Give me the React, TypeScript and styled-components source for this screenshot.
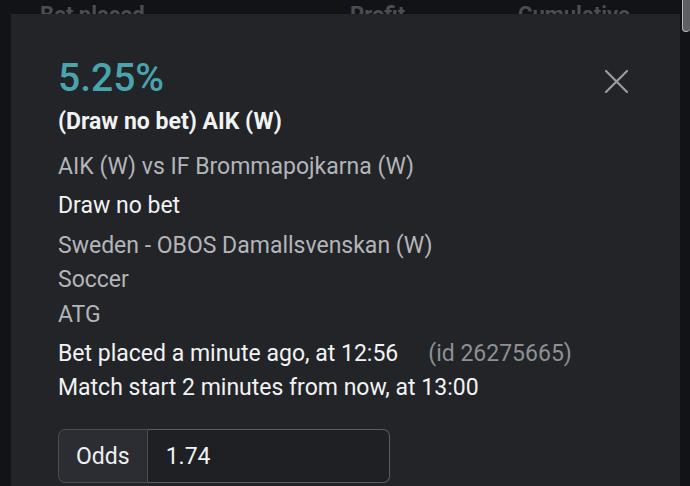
import styled, { createGlobalStyle } from 'styled-components';

const GlobalStyle = createGlobalStyle`
  html, body {
    margin: 0;
    padding: 0;
    background: #121316;
    font-family: Roboto, "Liberation Sans", sans-serif;
    overflow: hidden;
  }
`;

const Page = styled.div`
  position: relative;
  width: 690px;
  height: 486px;
  overflow: hidden;
`;

const TableHead = styled.div`
  display: grid;
  grid-template-columns: 310px 168px 1fr;
  padding: 2px 0 0 40px;
  color: #4b4d52;
  font-size: 22px;
  font-weight: 700;
  line-height: 26px;
`;

const ScrollThumb = styled.div`
  position: absolute;
  top: -6px;
  right: 0;
  width: 8px;
  height: 38px;
  border-radius: 5px;
  background: #5d5f63;
  border: 1px solid #b8b9bb;
  border-right: none;
  box-sizing: border-box;
`;

const Modal = styled.div`
  position: absolute;
  top: 14px;
  left: 11px;
  width: 669px;
  height: 500px;
  background: #222428;
  box-sizing: border-box;
  padding: 44px 47px 0;
`;

const CloseButton = styled.button`
  position: absolute;
  top: 52px;
  right: 49px;
  width: 30px;
  height: 30px;
  padding: 0;
  border: none;
  background: transparent;
  display: flex;
  align-items: center;
  justify-content: center;
`;

const Percent = styled.div`
  color: #49a4ae;
  font-size: 39px;
  font-weight: 500;
  line-height: 40px;
  margin-bottom: 7px;
`;

const Line = styled.div<{ $tone?: 'white' | 'gray'; $bold?: boolean; $gap?: number }>`
  color: ${(p) => (p.$tone === 'gray' ? '#b3b5b8' : '#f1f2f3')};
  font-size: 23px;
  font-weight: ${(p) => (p.$bold ? 700 : 400)};
  line-height: 34px;
  margin-top: ${(p) => p.$gap ?? 0}px;
  white-space: nowrap;
`;

const Muted = styled.span`
  color: #8e9094;
  margin-left: 30px;
`;

const InputGroup = styled.div`
  display: flex;
  width: 332px;
  height: 54px;
  margin-top: 24px;
`;

const Addon = styled.div`
  display: flex;
  align-items: center;
  padding: 0 17px;
  background: #2b2d32;
  border: 1px solid #4a4d53;
  border-radius: 7px 0 0 7px;
  color: #eef0f1;
  font-size: 23px;
`;

const Input = styled.input`
  flex: 1;
  min-width: 0;
  background: #1e2024;
  border: 1px solid #5a5d63;
  border-left: none;
  border-radius: 0 7px 7px 0;
  color: #f1f2f3;
  font-family: inherit;
  font-size: 23px;
  padding: 0 18px;
  outline: none;
`;

function App() {
  return (
    <Page>
      <GlobalStyle />
      <TableHead>
        <span>Bet placed</span>
        <span>Profit</span>
        <span>Cumulative</span>
      </TableHead>
      <ScrollThumb />
      <Modal>
        <CloseButton aria-label="Close">
          <svg width="25" height="25" viewBox="0 0 25 25">
            <path d="M2 2L23 23M23 2L2 23" stroke="#9b9c9f" strokeWidth="2.2" strokeLinecap="round" />
          </svg>
        </CloseButton>
        <Percent>5.25%</Percent>
        <Line $bold>(Draw no bet) AIK (W)</Line>
        <Line $tone="gray" $gap={11}>AIK (W) vs IF Brommapojkarna (W)</Line>
        <Line $gap={5}>Draw no bet</Line>
        <Line $tone="gray" $gap={6}>Sweden - OBOS Damallsvenskan (W)</Line>
        <Line $tone="gray">Soccer</Line>
        <Line $tone="gray" $gap={1}>ATG</Line>
        <Line $gap={5}>
          Bet placed a minute ago, at 12:56<Muted>(id 26275665)</Muted>
        </Line>
        <Line>Match start 2 minutes from now, at 13:00</Line>
        <InputGroup>
          <Addon>Odds</Addon>
          <Input defaultValue="1.74" />
        </InputGroup>
      </Modal>
    </Page>
  );
}

export default App;
